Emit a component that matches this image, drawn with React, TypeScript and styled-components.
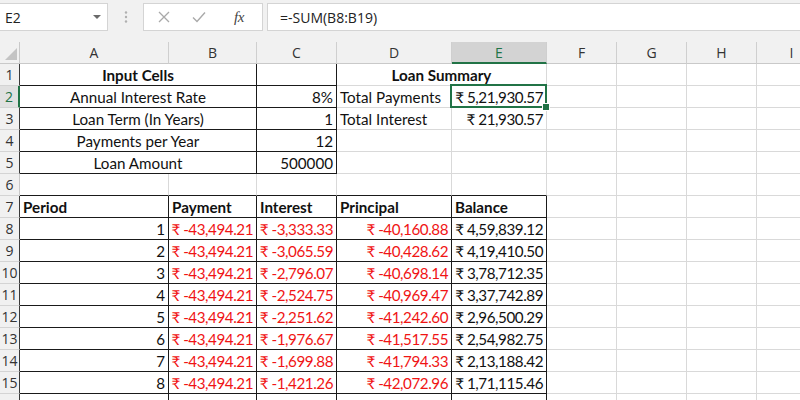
import React from 'react';
import styled, { createGlobalStyle, css } from 'styled-components';

const GREEN = '#217346';
const GRID = '#d9d9d9';
const INK = '#111';
const RED = '#f01414';

const GlobalStyle = createGlobalStyle`
  html, body {
    margin: 0;
    padding: 0;
    background: #ffffff;
  }
  body {
    font-family: Lato, "Noto Sans", sans-serif;
  }
`;

const Window = styled.div`
  width: 800px;
  height: 400px;
  overflow: hidden;
  background: #ffffff;
  display: flex;
  flex-direction: column;
`;

const TopBar = styled.div`
  height: 42px;
  flex: 0 0 42px;
  background: #f1f1f1;
  box-sizing: border-box;
  padding-top: 3px;
`;

const FormulaRow = styled.div`
  display: flex;
  align-items: center;
  height: 28px;
`;

const NameBox = styled.div`
  width: 108px;
  height: 28px;
  box-sizing: border-box;
  background: #fff;
  border: 1px solid #d4d4d4;
  border-left: none;
  display: flex;
  align-items: center;
  justify-content: space-between;
  padding: 0 6px 0 5px;
  font-family: "Open Sans", "Noto Sans", sans-serif;
  font-size: 14px;
  color: #222;
`;

const Caret = styled.span`
  width: 0;
  height: 0;
  border-left: 4px solid transparent;
  border-right: 4px solid transparent;
  border-top: 4px solid #6a6a6a;
`;

const Grip = styled.div`
  width: 35px;
  display: flex;
  justify-content: center;
`;

const FxGroup = styled.div`
  width: 120px;
  height: 28px;
  box-sizing: border-box;
  background: #fff;
  border: 1px solid #d4d4d4;
  display: flex;
  align-items: center;
  padding-left: 14px;
  gap: 22px;
`;

const FxLabel = styled.span`
  font-family: "Liberation Serif", "DejaVu Serif", serif;
  font-style: italic;
  font-size: 15px;
  color: #444;
  margin-left: 6px;
  letter-spacing: -0.5px;
`;

const FormulaInput = styled.div`
  flex: 1;
  margin-left: 4px;
  height: 28px;
  box-sizing: border-box;
  background: #fff;
  border: 1px solid #d4d4d4;
  border-right: none;
  display: flex;
  align-items: center;
  padding-left: 12px;
  font-family: "Open Sans", "Noto Sans", sans-serif;
  font-size: 14px;
  color: #222;
`;

const Sheet = styled.div`
  display: grid;
  grid-template-columns: 20px 149px 88px 80px 115px 95px 70px 70px 70px 70px;
  grid-auto-rows: 22px;
  width: 827px;
`;

const Corner = styled.div`
  background: #f1f1f1;
  border-right: 1px solid #c9c9c9;
  border-bottom: 1px solid #c9c9c9;
  box-sizing: border-box;
  display: flex;
  align-items: flex-end;
  justify-content: flex-end;
  padding: 0 2px 3px 0;
`;

const ColHeader = styled.div<{ $active?: boolean }>`
  box-sizing: border-box;
  background: #f1f1f1;
  border-right: 1px solid #cfcfcf;
  border-bottom: 1px solid #c9c9c9;
  display: flex;
  align-items: center;
  justify-content: center;
  font-family: "Open Sans", "Noto Sans", sans-serif;
  font-size: 14px;
  color: #333;
  ${(p) =>
    p.$active &&
    css`
      background: #d3d3d3;
      color: ${GREEN};
      border-bottom: 2px solid ${GREEN};
    `}
`;

const RowHeader = styled.div<{ $active?: boolean; $edge?: boolean }>`
  box-sizing: border-box;
  background: #f1f1f1;
  border-right: 1px solid ${(p) => (p.$edge ? '#3a3a3a' : '#c9c9c9')};
  border-bottom: 1px solid #d4d4d4;
  display: flex;
  align-items: center;
  justify-content: center;
  font-family: "Open Sans", "Noto Sans", sans-serif;
  font-size: 14px;
  color: #333;
  ${(p) =>
    p.$active &&
    css`
      background: #e1e1e1;
      color: ${GREEN};
      border-right: 2px solid ${GREEN};
    `}
`;

type Align = 'left' | 'center' | 'right';

const Cell = styled.div<{
  $span: number;
  $align: Align;
  $bold?: boolean;
  $red?: boolean;
  $num?: boolean;
  $right: string;
  $bottom: string;
}>`
  grid-column: span ${(p) => p.$span};
  position: relative;
  box-sizing: border-box;
  border-right: 1px solid ${(p) => p.$right};
  border-bottom: 1px solid ${(p) => p.$bottom};
  display: flex;
  align-items: center;
  justify-content: ${(p) =>
    p.$align === 'left' ? 'flex-start' : p.$align === 'center' ? 'center' : 'flex-end'};
  padding: 1px 3px 0 3px;
  font-size: 15.2px;
  font-weight: ${(p) => (p.$bold ? 700 : 400)};
  letter-spacing: ${(p) => (p.$num ? '-0.45px' : 'normal')};
  color: ${(p) => (p.$red ? RED : INK)};
  white-space: nowrap;
`;

const Selection = styled.div`
  position: absolute;
  top: -2px;
  left: -2px;
  right: -1px;
  bottom: -1px;
  border: 2px solid ${GREEN};
  pointer-events: none;
  z-index: 2;

  &::after {
    content: '';
    position: absolute;
    right: -5px;
    bottom: -5px;
    width: 6px;
    height: 6px;
    background: ${GREEN};
    border: 1px solid #fff;
  }
`;

interface CellDef {
  text?: string;
  span?: number;
  align?: Align;
  bold?: boolean;
  red?: boolean;
  num?: boolean;
  selected?: boolean;
}

const COLS = ['A', 'B', 'C', 'D', 'E', 'F', 'G', 'H', 'I'];

const rs = (n: string) => `₹ ${n}`;

const boxed = (r: number, c: number) =>
  (r >= 1 && r <= 5 && c <= 2) || (r >= 7 && c <= 4);

const amort = [
  ['1', '-3,333.33', '-40,160.88', '4,59,839.12'],
  ['2', '-3,065.59', '-40,428.62', '4,19,410.50'],
  ['3', '-2,796.07', '-40,698.14', '3,78,712.35'],
  ['4', '-2,524.75', '-40,969.47', '3,37,742.89'],
  ['5', '-2,251.62', '-41,242.60', '2,96,500.29'],
  ['6', '-1,976.67', '-41,517.55', '2,54,982.75'],
  ['7', '-1,699.88', '-41,794.33', '2,13,188.42'],
  ['8', '-1,421.26', '-42,072.96', '1,71,115.46'],
];

const inputRow = (label: string, value: string, d?: CellDef, e?: CellDef): CellDef[] => [
  { text: label, span: 2, align: 'center' },
  { text: value, align: 'right' },
  d ?? {},
  e ?? {},
];

const money = (n: string, red = false): CellDef => ({
  text: rs(n),
  align: 'right',
  red,
  num: true,
});

const rows: CellDef[][] = [
  [
    { text: 'Input Cells', span: 2, align: 'center', bold: true },
    {},
    { text: 'Loan Summary', span: 2, align: 'center', bold: true },
  ],
  inputRow(
    'Annual Interest Rate',
    '8%',
    { text: 'Total Payments', align: 'left' },
    { ...money('5,21,930.57'), selected: true }
  ),
  inputRow(
    'Loan Term (In Years)',
    '1',
    { text: 'Total Interest', align: 'left' },
    money('21,930.57')
  ),
  inputRow('Payments per Year', '12'),
  inputRow('Loan Amount', '500000'),
  [],
  [
    { text: 'Period', align: 'left', bold: true },
    { text: 'Payment', align: 'left', bold: true },
    { text: 'Interest', align: 'left', bold: true },
    { text: 'Principal', align: 'left', bold: true },
    { text: 'Balance', align: 'left', bold: true },
  ],
  ...amort.map(([p, i, pr, b]) => [
    { text: p, align: 'right' as Align },
    money('-43,494.21', true),
    money(i, true),
    money(pr, true),
    money(b),
  ]),
  // row 16 only peeks in at the bottom edge
  [],
];

const Cross = () => (
  <svg width="12" height="12" viewBox="0 0 12 12">
    <path d="M1 1L11 11M11 1L1 11" stroke="#a9a9a9" strokeWidth="1.3" fill="none" />
  </svg>
);

const Check = () => (
  <svg width="14" height="12" viewBox="0 0 14 12">
    <path d="M1 6.5L5 10.5L13 1.5" stroke="#a9a9a9" strokeWidth="1.4" fill="none" />
  </svg>
);

const Dots = () => (
  <svg width="4" height="12" viewBox="0 0 4 12">
    <circle cx="2" cy="1.5" r="1.2" fill="#b0b0b0" />
    <circle cx="2" cy="6" r="1.2" fill="#b0b0b0" />
    <circle cx="2" cy="10.5" r="1.2" fill="#b0b0b0" />
  </svg>
);

const SelectAll = () => (
  <svg width="12" height="12" viewBox="0 0 12 12">
    <path d="M12 0L12 12L0 12Z" fill="#c4c4c4" />
  </svg>
);

const renderRow = (r: number, defs: CellDef[]) => {
  const out: React.ReactNode[] = [];
  let c = 0;
  let i = 0;
  while (c < COLS.length) {
    const d = defs[i] ?? {};
    const span = d.span ?? 1;
    const last = c + span - 1;
    const rightDark = boxed(r, last) || boxed(r, last + 1);
    let bottomDark = false;
    for (let k = c; k <= last; k++) {
      if (boxed(r, k) || boxed(r + 1, k)) bottomDark = true;
    }
    out.push(
      <Cell
        key={`${r}-${c}`}
        $span={span}
        $align={d.align ?? 'left'}
        $bold={d.bold}
        $red={d.red}
        $num={d.num}
        $right={rightDark ? '#1a1a1a' : GRID}
        $bottom={bottomDark ? '#1a1a1a' : GRID}
      >
        {d.text}
        {d.selected && <Selection />}
      </Cell>
    );
    c += span;
    i++;
  }
  return out;
};

export default function App() {
  return (
    <Window>
      <GlobalStyle />
      <TopBar>
        <FormulaRow>
          <NameBox>
            <span>E2</span>
            <Caret />
          </NameBox>
          <Grip>
            <Dots />
          </Grip>
          <FxGroup>
            <Cross />
            <Check />
            <FxLabel>fx</FxLabel>
          </FxGroup>
          <FormulaInput>=-SUM(B8:B19)</FormulaInput>
        </FormulaRow>
      </TopBar>
      <Sheet>
        <Corner>
          <SelectAll />
        </Corner>
        {COLS.map((l) => (
          <ColHeader key={l} $active={l === 'E'}>
            {l}
          </ColHeader>
        ))}
        {rows.map((defs, idx) => {
          const r = idx + 1;
          return (
            <React.Fragment key={r}>
              <RowHeader $active={r === 2} $edge={boxed(r, 0)}>
                {r <= 15 ? r : ''}
              </RowHeader>
              {renderRow(r, defs)}
            </React.Fragment>
          );
        })}
      </Sheet>
    </Window>
  );
}
